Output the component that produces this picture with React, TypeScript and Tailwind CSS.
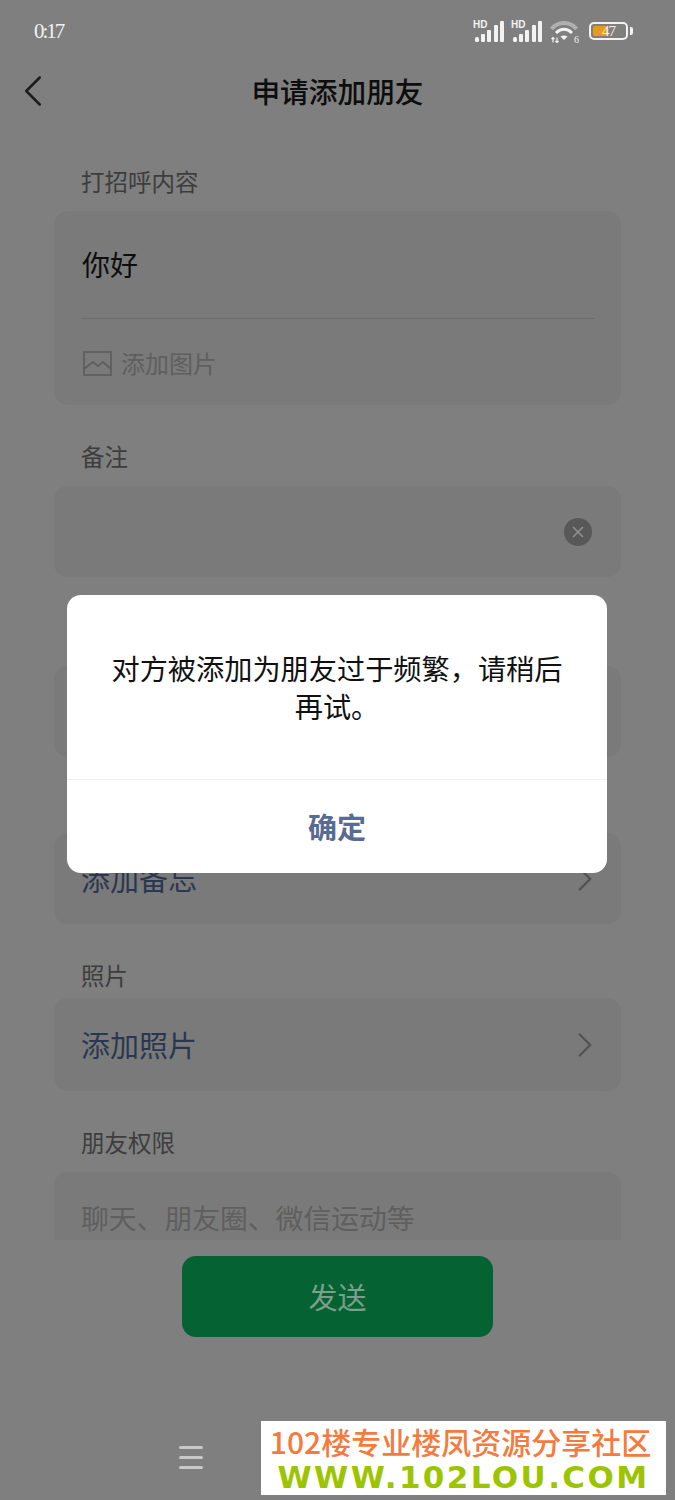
import { ChevronLeft, ChevronRight } from "lucide-react";

const cjk = "font-['Noto_Sans_CJK_SC','Noto_Sans',sans-serif]";

function SignalIcon() {
  return (
    <svg width="32" height="22" viewBox="0 0 32 22">
      <text x="0" y="8" fontSize="10" fontWeight="700" fill="#f2f2f2" fontFamily="Liberation Sans, sans-serif">HD</text>
      <rect x="2" y="17" width="4" height="5" rx="1.500" fill="#f2f2f2" />
      <rect x="8" y="14" width="4" height="8" rx="1" fill="#f2f2f2" />
      <rect x="14" y="10" width="4" height="12" rx="1" fill="#f2f2f2" />
      <rect x="21" y="5" width="4" height="17" rx="1" fill="#f2f2f2" />
      <rect x="27" y="1" width="4" height="21" rx="1" fill="#f2f2f2" />
    </svg>
  );
}

function WifiIcon() {
  return (
    <svg width="30" height="23" viewBox="0 0 30 23" fill="none">
      <path d="M1.500 9 C8 1 20 1 26.500 9" stroke="#b0b0b0" strokeWidth="4" />
      <path d="M6 13 C11 8 17 8 22 13" stroke="#f2f2f2" strokeWidth="3" />
      <path d="M10.500 16.500 C12.500 15 15.500 15 17.500 16.500 L14 20 Z" fill="#f2f2f2" />
      <path d="M3 17.500 V22.500 M1.500 19 L3 17.500 L4.500 19 M7 17.500 V22.500 M5.500 21 L7 22.500 L8.500 21" stroke="#f2f2f2" strokeWidth="1.200" />
      <text x="24" y="22.500" fontSize="10" fill="#f2f2f2" fontFamily="Liberation Serif, serif">6</text>
    </svg>
  );
}

function BatteryIcon() {
  return (
    <div className="flex items-center gap-[2px]">
      <div className="relative w-[39px] h-[18px] rounded-[5px] border-2 border-[#f2f2f2] p-[2px]">
        <div className="h-full w-[14px] rounded-[2px] bg-[#e89a1c]" />
        <span className="absolute inset-0 flex items-center justify-center font-['Liberation_Serif',serif] text-[15px] leading-none tracking-[-1px] text-[#f2f2f2]">47</span>
      </div>
      <div className="w-[3px] h-[8px] rounded-r-[2px] bg-[#f2f2f2]" />
    </div>
  );
}

function FieldLabel({ children, className = "" }: { children: string; className?: string }) {
  return <p className={`text-[23.500px] leading-[28px] pb-[2px] text-[#3d3d3d] ${className}`}>{children}</p>;
}

function LinkRow({ text, height }: { text: string; height: string }) {
  return (
    <div className={`${height} rounded-[14px] bg-[#7a7a7a] flex items-center justify-between pl-[27px] pr-[15px]`}>
      <span className="text-[29px] leading-none text-[#2b3750]">{text}</span>
      <ChevronRight size={42} strokeWidth={1.300} className="text-[#525252]" />
    </div>
  );
}

export default function App() {
  return (
    <div className={`relative w-[675px] h-[1500px] overflow-hidden bg-[#7f7f7f] ${cjk}`}>
      {/* Status bar */}
      <div className="h-[62px] flex items-center justify-between pl-[34px] pr-[42px]">
        <span className="font-['Liberation_Serif',serif] text-[21px] tracking-[-2px] pt-[2px] text-[#f2f2f2]">0:17</span>
        <div className="flex items-center gap-[6px]">
          <SignalIcon />
          <SignalIcon />
          <div className="ml-[1px] flex">
            <WifiIcon />
          </div>
          <div className="ml-[3px]">
            <BatteryIcon />
          </div>
        </div>
      </div>

      {/* Header */}
      <div className="relative h-[60px] flex items-center justify-center">
        <ChevronLeft size={54} strokeWidth={1.100} className="absolute left-[6px] top-[2px] text-[#1c1c1c]" />
        <h1 className="text-[28.700px] font-medium leading-none pb-[2px] text-[#0d0d0d]">申请添加朋友</h1>
      </div>

      {/* Form */}
      <div className="h-[1118px] overflow-hidden px-[54px] pt-[45px]">
        <FieldLabel className="pl-[27px]">打招呼内容</FieldLabel>
        <div className="mt-[14px] h-[194px] rounded-[14px] bg-[#7a7a7a] px-[27px]">
          <div className="h-[108px] border-b border-[#6b6b6b] flex items-center pb-[2px]">
            <span className="pl-[1px] text-[28px] leading-none text-[#0d0d0d]">你好</span>
          </div>
          <div className="h-[86px] flex items-center gap-[9px] pl-[2px] pt-[2px]">
            <svg width="29" height="25" viewBox="0 0 29 25" fill="none" stroke="#5f5f5f" strokeWidth="1.800">
              <rect x="1" y="1" width="27" height="23" />
              <path d="M1 18 L10 11 L15 15 L20 11 L28 18" />
            </svg>
            <span className="text-[24px] leading-none text-[#5f5f5f]">添加图片</span>
          </div>
        </div>

        <FieldLabel className="mt-[37px] pl-[27px]">备注</FieldLabel>
        <div className="mt-[14px] h-[91px] rounded-[14px] bg-[#7a7a7a] flex items-center justify-end pr-[29px]">
          <div className="w-[28px] h-[28px] rounded-full bg-[#585858] flex items-center justify-center">
            <svg width="12" height="12" viewBox="0 0 12 12" stroke="#8f8f8f" strokeWidth="1.600">
              <path d="M1 1 L11 11 M11 1 L1 11" />
            </svg>
          </div>
        </div>

        {/* row whose label sits behind the dialog */}
        <div className="mt-[89px] h-[91px] rounded-[14px] bg-[#7a7a7a]" />

        <div className="mt-[76px]">
          <LinkRow text="添加备忘" height="h-[91px]" />
        </div>

        <FieldLabel className="mt-[37px] pl-[27px]">照片</FieldLabel>
        <div className="mt-[7px]">
          <LinkRow text="添加照片" height="h-[93px]" />
        </div>

        <FieldLabel className="mt-[37px] pl-[27px]">朋友权限</FieldLabel>
        <div className="mt-[14px] h-[92px] rounded-[14px] bg-[#7a7a7a] flex items-center pl-[27px]">
          <span className="text-[27.800px] leading-none text-[#5f5f5f]">聊天、朋友圈、微信运动等</span>
        </div>
      </div>

      {/* Send button */}
      <div className="flex justify-center pt-[16px]">
        <button className="w-[311px] h-[81px] rounded-[14px] bg-[#056333] text-[29px] text-[#7a9f8a]">发送</button>
      </div>

      {/* Nav bar menu */}
      <div className="absolute left-[179px] top-[1446px] flex flex-col gap-[7px]">
        <div className="w-[24px] h-[3px] rounded-full bg-[#c8c8c8]" />
        <div className="w-[24px] h-[3px] rounded-full bg-[#c8c8c8]" />
        <div className="w-[24px] h-[3px] rounded-full bg-[#c8c8c8]" />
      </div>

      {/* Dialog */}
      <div className="absolute left-[67px] top-[595px] w-[540px] h-[278px] rounded-[14px] bg-white flex flex-col">
        <div className="h-[185px] border-b border-[#f0f0f0] flex items-center justify-center px-[36px]">
          <p className="text-center text-[28.200px] leading-[38px] text-[#111111]">对方被添加为朋友过于频繁，请稍后再试。</p>
        </div>
        <div className="flex-1 flex items-center justify-center">
          <span className="text-[29px] font-bold leading-none text-[#576b95]">确定</span>
        </div>
      </div>

      {/* Watermark */}
      <div className="absolute left-[261px] top-[1421px] w-[405px] h-[74px] bg-white flex flex-col items-center justify-center">
        <span className="pr-[6px] text-[30px] leading-[36px] font-medium whitespace-nowrap text-[#f47b3e]">102楼专业楼凤资源分享社区</span>
        <span className="pt-[2px] font-['DejaVu_Sans',sans-serif] text-[31px] leading-[32px] font-bold tracking-[2.400px] whitespace-nowrap text-[#9cc400]">WWW.102LOU.COM</span>
      </div>
    </div>
  );
}
